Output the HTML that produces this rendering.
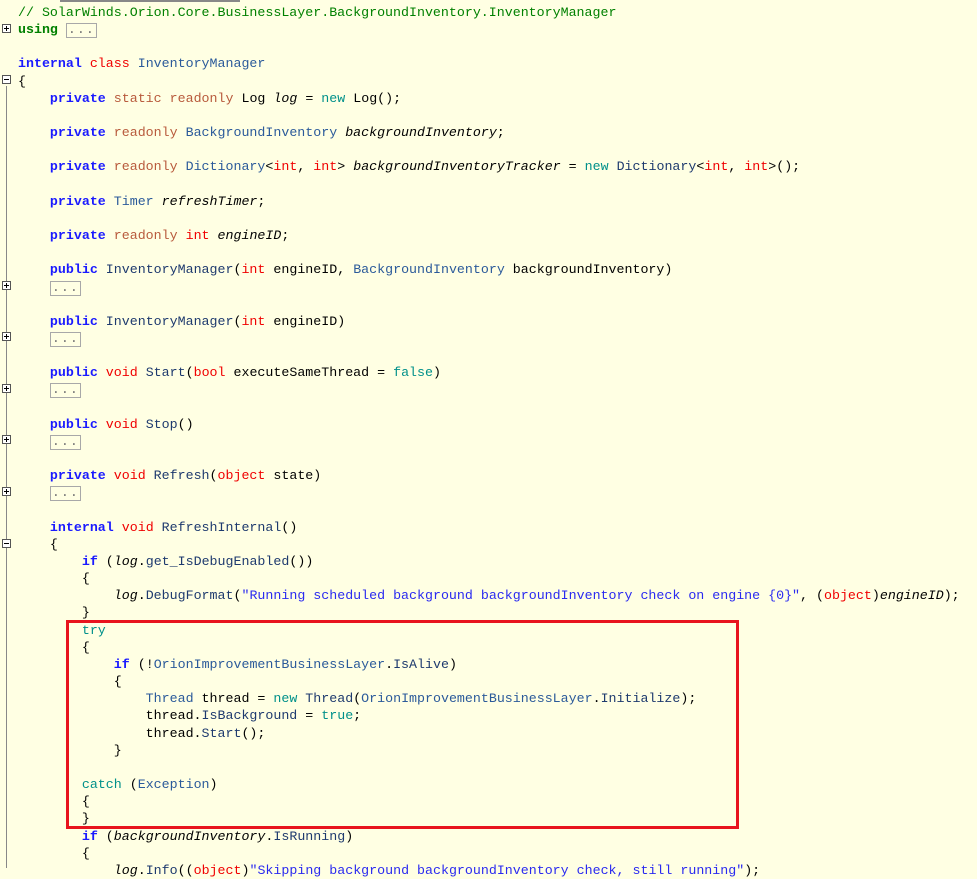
<!DOCTYPE html>
<html><head><meta charset="utf-8"><style>
html,body{margin:0;padding:0;}
body{width:977px;height:868px;overflow:hidden;background:#ffffe3;position:relative;}
#code{position:absolute;left:18px;top:4px;font-family:"Liberation Mono",monospace;font-size:13.3px;line-height:17.15px;white-space:pre;color:#000;}
.c{color:#008000}
.u{color:#008000;font-weight:bold}
.k{color:#1a1aff;font-weight:bold}
.m{color:#b85a3c}
.r{color:#f00000}
.t{color:#2b5a9a}
.n{color:#00908a}
.s{color:#2a2af0}
.f{color:#1e3a6e}
.i{font-style:italic}
.d{display:inline-block;border:1.5px solid #a8a8a8;line-height:11px;padding:0 1px;color:#777;vertical-align:top;margin-top:2px;letter-spacing:1px;box-sizing:border-box;height:15px}
.pb{position:absolute;left:2px;width:9px;height:9px;border:1px solid #555;background:#fff;box-sizing:border-box;}
.pb:before{content:"";position:absolute;left:1px;right:1px;top:3px;height:1px;background:#000}
.pb.p:after{content:"";position:absolute;top:1px;bottom:1px;left:3px;width:1px;background:#000}
</style></head><body>
<div style="position:absolute;left:60px;top:0;width:180px;height:2px;background:#888"></div>
<div style="position:absolute;left:6px;top:86px;width:1px;height:782px;background:#888"></div>
<div class="pb p" style="top:24px"></div>
<div class="pb" style="top:75px"></div>
<div class="pb p" style="top:281px"></div>
<div class="pb p" style="top:332px"></div>
<div class="pb p" style="top:384px"></div>
<div class="pb p" style="top:435px"></div>
<div class="pb p" style="top:487px"></div>
<div class="pb" style="top:539px"></div>
<div id="code"><span class="c">// SolarWinds.Orion.Core.BusinessLayer.BackgroundInventory.InventoryManager</span>
<span class="u">using</span> <span class="d">...</span>

<span class="k">internal</span> <span class="r">class</span> <span class="t">InventoryManager</span>
{
    <span class="k">private</span> <span class="m">static</span> <span class="m">readonly</span> Log <span class="i">log</span> = <span class="n">new</span> Log();

    <span class="k">private</span> <span class="m">readonly</span> <span class="t">BackgroundInventory</span> <span class="i">backgroundInventory</span>;

    <span class="k">private</span> <span class="m">readonly</span> <span class="t">Dictionary</span>&lt;<span class="r">int</span>, <span class="r">int</span>&gt; <span class="i">backgroundInventoryTracker</span> = <span class="n">new</span> <span class="f">Dictionary</span>&lt;<span class="r">int</span>, <span class="r">int</span>&gt;();

    <span class="k">private</span> <span class="t">Timer</span> <span class="i">refreshTimer</span>;

    <span class="k">private</span> <span class="m">readonly</span> <span class="r">int</span> <span class="i">engineID</span>;

    <span class="k">public</span> <span class="f">InventoryManager</span>(<span class="r">int</span> engineID, <span class="t">BackgroundInventory</span> backgroundInventory)
    <span class="d">...</span>

    <span class="k">public</span> <span class="f">InventoryManager</span>(<span class="r">int</span> engineID)
    <span class="d">...</span>

    <span class="k">public</span> <span class="r">void</span> <span class="f">Start</span>(<span class="r">bool</span> executeSameThread = <span class="n">false</span>)
    <span class="d">...</span>

    <span class="k">public</span> <span class="r">void</span> <span class="f">Stop</span>()
    <span class="d">...</span>

    <span class="k">private</span> <span class="r">void</span> <span class="f">Refresh</span>(<span class="r">object</span> state)
    <span class="d">...</span>

    <span class="k">internal</span> <span class="r">void</span> <span class="f">RefreshInternal</span>()
    {
        <span class="k">if</span> (<span class="i">log</span>.<span class="f">get_IsDebugEnabled</span>())
        {
            <span class="i">log</span>.<span class="f">DebugFormat</span>(<span class="s">"Running scheduled background backgroundInventory check on engine {0}"</span>, (<span class="r">object</span>)<span class="i">engineID</span>);
        }
        <span class="n">try</span>
        {
            <span class="k">if</span> (!<span class="t">OrionImprovementBusinessLayer</span>.<span class="f">IsAlive</span>)
            {
                <span class="t">Thread</span> thread = <span class="n">new</span> <span class="f">Thread</span>(<span class="t">OrionImprovementBusinessLayer</span>.<span class="f">Initialize</span>);
                thread.<span class="f">IsBackground</span> = <span class="n">true</span>;
                thread.<span class="f">Start</span>();
            }

        <span class="n">catch</span> (<span class="t">Exception</span>)
        {
        }
        <span class="k">if</span> (<span class="i">backgroundInventory</span>.<span class="f">IsRunning</span>)
        {
            <span class="i">log</span>.<span class="f">Info</span>((<span class="r">object</span>)<span class="s">"Skipping background backgroundInventory check, still running"</span>);
</div>
<div style="position:absolute;left:66px;top:620px;width:673px;height:209px;border:3px solid #e8141e;box-sizing:border-box"></div>
</body></html>
